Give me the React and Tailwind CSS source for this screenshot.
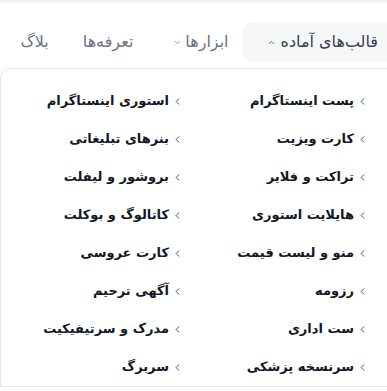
import React from 'react';
import { ChevronLeft, ChevronDown, ChevronUp } from 'lucide-react';

// Menu items, right column first (RTL order)
const rightCol = [
  'پست اینستاگرام',
  'کارت ویزیت',
  'تراکت و فلایر',
  'هایلایت استوری',
  'منو و لیست قیمت',
  'رزومه',
  'ست اداری',
  'سرنسخه پزشکی',
];

const leftCol = [
  'استوری اینستاگرام',
  'بنرهای تبلیغاتی',
  'بروشور و لیفلت',
  'کاتالوگ و بوکلت',
  'کارت عروسی',
  'آگهی ترحیم',
  'مدرک و سرتیفیکیت',
  'سربرگ',
];

const MenuItem = ({ label }) => (
  <a href="#" className="flex items-center gap-[3px] h-[38px] text-[13px] font-bold text-[#111827]">
    <ChevronLeft size={11} strokeWidth={2} className="text-[#374151] shrink-0" />
    <span>{label}</span>
  </a>
);

export default function App() {
  return (
    <div dir="rtl" className="w-full h-[391px] bg-white overflow-hidden" style={{ fontFamily: '"DejaVu Sans", sans-serif' }}>
      <div className="h-[3px] bg-[#eef4fc]" />

      {/* Top nav */}
      <nav className="flex items-center mt-[19px] h-[40px]">
        <button className="flex items-center gap-[5px] h-full pr-[9px] pl-[24px] bg-[#f6f7f9] rounded-l-[10px] text-[16px] text-[#374151]">
          <span>قالب‌های آماده</span>
          <ChevronUp size={9} strokeWidth={2} />
        </button>
        <button className="flex items-center gap-[3px] mr-[14px] text-[16px] text-[#6b7280]">
          <span>ابزارها</span>
          <ChevronDown size={9} strokeWidth={2} />
        </button>
        <a href="#" className="mr-[40px] text-[16px] text-[#6b7280]">تعرفه‌ها</a>
        <a href="#" className="mr-[34px] text-[16px] text-[#6b7280]">بلاگ</a>
      </nav>

      {/* Dropdown panel */}
      <div className="mt-[6px] -mr-[20px] border border-[#e5e7eb] rounded-tl-[10px] pt-[13px] pr-[38px]">
        <div className="grid grid-cols-[185px_185px]">
          <div className="flex flex-col">
            {rightCol.map((label) => (
              <MenuItem key={label} label={label} />
            ))}
          </div>
          <div className="flex flex-col">
            {leftCol.map((label) => (
              <MenuItem key={label} label={label} />
            ))}
          </div>
        </div>
      </div>
    </div>
  );
}
